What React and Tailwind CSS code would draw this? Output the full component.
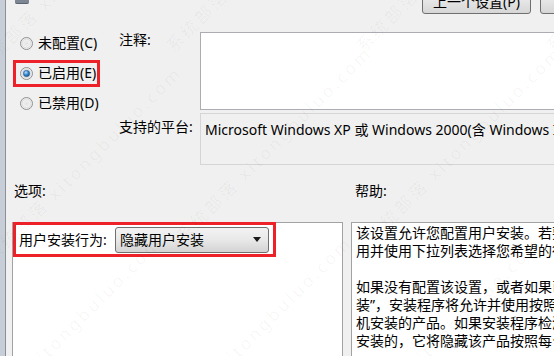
import React from "react";

function Radio({ checked }) {
  return (
    <svg width="13" height="13" viewBox="0 0 13 13" className="shrink-0">
      <defs>
        <radialGradient id="rbody" cx="0.5" cy="0.5" r="0.6">
          <stop offset="0" stopColor="#e4e4e4" />
          <stop offset="1" stopColor="#fbfbfb" />
        </radialGradient>
        <radialGradient id="rdot" cx="0.4" cy="0.35" r="0.7">
          <stop offset="0" stopColor="#b9e1fb" />
          <stop offset="0.5" stopColor="#3a8ad0" />
          <stop offset="1" stopColor="#16477a" />
        </radialGradient>
      </defs>
      <circle cx="6.5" cy="6.5" r="6" fill="url(#rbody)" stroke="#8e8f8f" strokeWidth="1" />
      <circle cx="6.5" cy="6.5" r="4.6" fill="none" stroke="#d2d2d2" strokeWidth="0.8" />
      {checked && <circle cx="6.5" cy="6.5" r="3.2" fill="url(#rdot)" stroke="#1f5e96" strokeWidth="0.5" />}
    </svg>
  );
}

const radios = [
  { label: "未配置(C)", checked: false },
  { label: "已启用(E)", checked: true, marked: true },
  { label: "已禁用(D)", checked: false },
];

const helpLines = [
  "该设置允许您配置用户安装。若要配置该设置，请将其设置为“已启",
  "用并使用下拉列表选择您希望的行为。",
  "\u00a0",
  "如果没有配置该设置，或者如果已启用该设置并选择了“允许用户安",
  "装”，安装程序将允许并使用按照每个用户安装的产品，而不是按照每台计算",
  "机安装的产品。如果安装程序检测到按照每个用户安装的产品",
  "安装的，它将隐藏该产品按照每台计算机安装的产品。",
];

const marks = [
  [-30, 60], [160, 40], [350, 40], [540, 40],
  [-20, 250], [170, 230], [360, 230], [550, 230],
  [-40, 420], [150, 420], [340, 420],
];

export default function App() {
  return (
    <div className="w-[554px] h-[356px] overflow-hidden bg-[#f0f0f0] flex relative text-[14px] text-black font-['Noto_Sans','Noto_Sans_CJK_SC',sans-serif]">
      {/* edge of the window behind */}
      <div className="w-[6px] shrink-0 bg-[#c7ced7] border-r border-[#8a9098]" />

      <div className="flex-1 flex flex-col min-w-0">
        {/* top strip with buttons */}
        <div className="h-[28px] flex items-start shrink-0">
          <div className="ml-[9px] w-[14px] h-[4px] shrink-0 rounded-b-[2px] bg-[#7d8794] border-b border-[#5a6470]" />
          <div className="ml-[393px] -mt-[10px] flex gap-[9px] shrink-0">
            <div className="w-[109px] h-[24px] shrink-0 rounded-[3px] border border-[#707070] bg-gradient-to-b from-[#f2f2f2] to-[#d6d6d6] flex items-center justify-center text-[14px] leading-none">
              上一个设置(P)
            </div>
            <div className="w-[30px] h-[24px] shrink-0 rounded-[3px] border border-[#707070] bg-gradient-to-b from-[#f2f2f2] to-[#d6d6d6]" />
          </div>
        </div>

        {/* state + comment + platform */}
        <div className="flex shrink-0">
          <div className="w-[108px] shrink-0 pl-[7px] flex flex-col">
            {radios.map((r) => (
              <div key={r.label} className="h-[30px] flex items-center">
                <div
                  className={
                    "w-[87px] h-[27px] border-[3px] pl-[4px] flex items-center gap-[5px] " +
                    (r.marked ? "border-[#ee2128]" : "border-transparent")
                  }
                >
                  <Radio checked={r.checked} />
                  <span className="leading-[16px] whitespace-nowrap">{r.label}</span>
                </div>
              </div>
            ))}
          </div>

          <div className="flex-1 pt-[4px] -mr-[20px] grid grid-cols-[86px_1fr] gap-y-[3px]">
            <div className="pl-[5px] leading-[16px]">注释:</div>
            <div className="h-[78px] bg-white border border-[#abadb3]" />
            <div className="pl-[5px] pt-[6px] leading-[16px] whitespace-nowrap">支持的平台:</div>
            <div className="h-[52px] border border-[#d5d5d5] pl-[4px] pt-[7px] leading-[18px] whitespace-nowrap overflow-hidden">
              Microsoft Windows XP 或 Windows 2000(含 Windows Installer v2.0)
            </div>
          </div>
        </div>

        {/* section labels */}
        <div className="h-[57px] shrink-0 pl-[6px] grid grid-cols-[331px_1fr] gap-x-[8px] pt-[18px] leading-[16px]">
          <div className="pl-[2px]">选项:</div>
          <div className="pl-[4px]">帮助:</div>
        </div>

        {/* panels */}
        <div className="flex-1 min-h-0 pl-[6px] grid grid-cols-[331px_1fr] gap-x-[8px] -mr-[20px]">
          <div className="bg-white border border-b-0 border-[#a2a2a2]">
            <div className="w-[263px] h-[35px] -mt-px border-[3px] border-[#ee2128] pl-[3px] pr-[4px] flex items-center">
              <span className="whitespace-nowrap leading-[16px]">用户安装行为:</span>
              <div className="ml-auto w-[154px] h-[26px] rounded-[3px] border border-[#707070] bg-gradient-to-b from-[#f3f3f3] via-[#e8e8e8] to-[#d3d3d3] flex items-center pl-[4px] pr-[7px]">
                <span className="whitespace-nowrap leading-[16px]">隐藏用户安装</span>
                <svg width="8" height="5" viewBox="0 0 8 5" className="ml-auto">
                  <path d="M0 0 H8 L4 5 Z" fill="#1a1a1a" />
                </svg>
              </div>
            </div>
          </div>
          <div className="bg-white border border-b-0 border-[#a2a2a2] pl-[4px] pt-[1px] overflow-hidden">
            {helpLines.map((l, i) => (
              <div key={i} className="leading-[18px] whitespace-nowrap">{l}</div>
            ))}
          </div>
        </div>
      </div>

      {/* site watermark */}
      <div className="absolute inset-0 pointer-events-none overflow-hidden">
        {marks.map(([x, y], i) => (
          <span
            key={i}
            className="absolute origin-top-left -rotate-45 whitespace-nowrap text-[17px] tracking-[3px] text-black/[0.04]"
            style={{ left: x, top: y }}
          >
            系统部落 xitongbuluo.com
          </span>
        ))}
      </div>
    </div>
  );
}
